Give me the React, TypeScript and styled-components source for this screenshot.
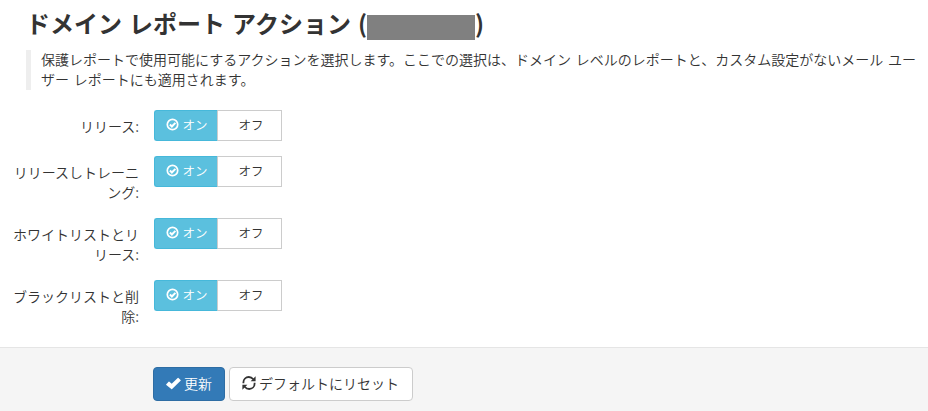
import React from "react";
import styled, { createGlobalStyle, css } from "styled-components";

const GlobalStyle = createGlobalStyle`
  * { box-sizing: border-box; }
  body {
    margin: 0;
    background: #fff;
    color: #333;
    font: 14px/20px "Noto Sans CJK JP", sans-serif;
    font-weight: 350;
    overflow: hidden;
  }
`;

const Page = styled.main`
  height: 411px;
  display: flex;
  flex-direction: column;
`;

const Content = styled.section`
  flex: 0 0 347px;
`;

const Title = styled.h1`
  display: flex;
  align-items: flex-start;
  margin: 0;
  padding: 9px 0 0 26px;
  height: 40px;
  font-size: 24px;
  line-height: 28px;
  font-weight: 700;
  white-space: pre;
  word-spacing: 1.6px;
`;

const Redacted = styled.span`
  width: 108px;
  height: 25px;
  margin-top: 6px;
  background: #808080;
`;

const Description = styled.p`
  display: flow-root;
  height: 40px;
  margin: 10px 0 0 26px;
  padding-left: 10px;
  border-left: 5px solid #eee;
  white-space: nowrap;
  line-height: 20px;
  word-spacing: 1.7px;
`;

const DescriptionText = styled.span`
  display: block;
  margin-top: -1px;
`;

const Form = styled.div`
  display: flex;
  flex-direction: column;
  gap: 15px;
  padding-top: 20px;
`;

const FormRow = styled.div`
  display: flex;
  align-items: flex-start;
  gap: 15px;
  min-height: 31px;
`;

const Label = styled.div<{ $lines: number }>`
  width: 139px;
  height: ${(p) => 7 + p.$lines * 20}px;
  padding-top: 6px;
  text-align: right;
  white-space: nowrap;
`;

const Toggle = styled.div`
  display: flex;
`;

const ToggleOption = styled.button<{ $active?: boolean }>`
  display: flex;
  align-items: center;
  justify-content: center;
  gap: 3px;
  height: 31px;
  width: 64px;
  padding: 0 0 2px 3px;
  font: inherit;
  font-size: 12.5px;
  border: 1px solid #ccc;
  border-left: 0;
  background: #fff;
  color: #333;
  ${(p) =>
    p.$active &&
    css`
      padding-left: 2px;
      border: 1px solid #46b8da;
      border-right-color: #ccc;
      border-radius: 3px 0 0 3px;
      background: #5bc0de;
      color: #fff;
    `}
`;

const Footer = styled.footer`
  flex: 1;
  display: flex;
  align-items: flex-start;
  gap: 4px;
  padding: 19px 0 0 153px;
  border-top: 1px solid #e5e5e5;
  background: #f5f5f5;
`;

const Button = styled.button<{ $primary?: boolean }>`
  display: flex;
  align-items: center;
  gap: 3px;
  height: 34px;
  width: ${(p) => (p.$primary ? 72 : 184)}px;
  padding: 0 0 2px 12px;
  font: inherit;
  white-space: nowrap;
  border: 1px solid ${(p) => (p.$primary ? "#2e6da4" : "#ccc")};
  border-radius: 4px;
  background: ${(p) => (p.$primary ? "#337ab7" : "#fff")};
  color: ${(p) => (p.$primary ? "#fff" : "#333")};
`;

const Icon = styled.svg<{ $width: number }>`
  flex: none;
  width: ${(p) => p.$width}px;
  height: 14px;
`;

const CheckCircleIcon = () => (
  <Icon $width={13} viewBox="0 0 13 14" fill="none" stroke="currentColor">
    <circle cx="6.5" cy="6.5" r="5.2" strokeWidth="1.7" />
    <path d="M3.9 6.5l2 2 3.5-3.6" strokeWidth="2" />
  </Icon>
);

const CheckIcon = () => (
  <Icon $width={15} viewBox="0 0 15 14" fill="currentColor">
    <path d="M.3 8.2 2.6 5.7q.4-.4.8 0L5.7 7.8 11.7 1.9q.4-.4.8 0l2.1 2q.4.4 0 .8L6.1 13.1q-.4.4-.8 0L.3 9q-.4-.4 0-.8z" />
  </Icon>
);

const RefreshIcon = () => (
  <Icon $width={14} viewBox="0 0 14 14">
    <g fill="none" stroke="currentColor" strokeWidth="1.8">
      <path d="M1.4 7.3V6.5C1.4 3.3 3.8 1 6.8 1c1.8 0 3.3.8 4.5 2.3" />
      <path d="M12.6 6.7v.8c0 3.2-2.4 5.5-5.4 5.5-1.8 0-3.3-.8-4.5-2.3" />
    </g>
    <path d="M13.6.2v5H8.6z" fill="currentColor" />
    <path d="M.4 13.8v-5h5z" fill="currentColor" />
  </Icon>
);

const ROWS: string[][] = [
  ["リリース:"],
  ["リリースしトレーニ", "ング:"],
  ["ホワイトリストとリ", "リース:"],
  ["ブラックリストと削", "除:"],
];

export default function App() {
  return (
    <Page>
      <GlobalStyle />
      <Content>
        <Title>
          ドメイン レポート アクション (<Redacted />)
        </Title>
        <Description>
          <DescriptionText>
            保護レポートで使用可能にするアクションを選択します。ここでの選択は、ドメイン レベルのレポートと、カスタム設定がないメール ユー
            <br />
            ザー レポートにも適用されます。
          </DescriptionText>
        </Description>
        <Form>
          {ROWS.map((lines) => (
            <FormRow key={lines[0]}>
              <Label $lines={lines.length}>
                {lines.map((line) => (
                  <div key={line}>{line}</div>
                ))}
              </Label>
              <Toggle>
                <ToggleOption $active>
                  <CheckCircleIcon />
                  オン
                </ToggleOption>
                <ToggleOption>オフ</ToggleOption>
              </Toggle>
            </FormRow>
          ))}
        </Form>
      </Content>
      <Footer>
        <Button $primary>
          <CheckIcon />
          更新
        </Button>
        <Button>
          <RefreshIcon />
          デフォルトにリセット
        </Button>
      </Footer>
    </Page>
  );
}
